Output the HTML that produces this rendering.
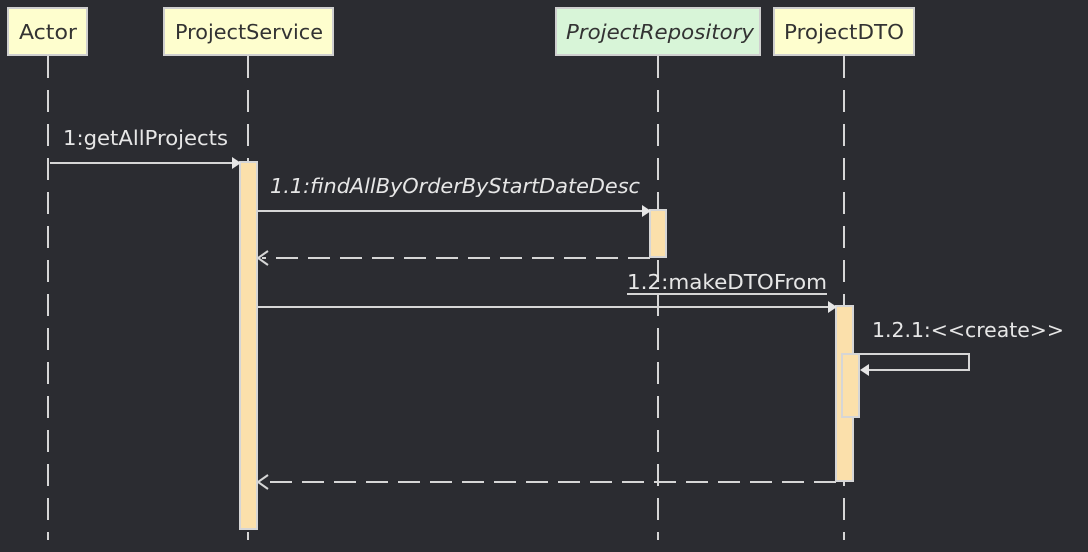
<!DOCTYPE html><html><head><style>body{margin:0;background:#2b2c31}svg{display:block}text{font-family:"DejaVu Sans","Liberation Sans",sans-serif;font-size:20px;fill:#e6e6e6}</style></head><body>
<svg width="1088" height="552" viewBox="0 0 1088 552">
<rect width="1088" height="552" fill="#2b2c31"/>
<g stroke="#d6d6d6" stroke-width="2" stroke-dasharray="22 12" fill="none">
<line x1="48" y1="56" x2="48" y2="540"/><line x1="248" y1="56" x2="248" y2="540"/><line x1="658" y1="56" x2="658" y2="540"/><line x1="844" y1="56" x2="844" y2="540"/>
</g>
<g stroke="#cfcfcf" stroke-width="2">
<rect x="8" y="8" width="79" height="47" fill="#fefece"/>
<rect x="164" y="8" width="169" height="47" fill="#fefece"/>
<rect x="556" y="8" width="204" height="47" fill="#d8f5d8"/>
<rect x="774" y="8" width="140" height="47" fill="#fefece"/>
</g>
<text x="19" y="39" style="fill:#333" textLength="58" lengthAdjust="spacingAndGlyphs">Actor</text>
<text x="175" y="39" style="fill:#333" textLength="148" lengthAdjust="spacingAndGlyphs">ProjectService</text>
<text x="566" y="39" style="fill:#333;font-style:italic" textLength="188" lengthAdjust="spacingAndGlyphs">ProjectRepository</text>
<text x="784" y="39" style="fill:#333" textLength="120" lengthAdjust="spacingAndGlyphs">ProjectDTO</text>
<g stroke="#d6d6d6" stroke-width="2" fill="#fbe0ab">
<rect x="240" y="162" width="17" height="367"/>
<rect x="650" y="210" width="16" height="47"/>
<rect x="836" y="306" width="17" height="175"/>
<rect x="842" y="354" width="17" height="63"/>
</g>
<g stroke="#d6d6d6" stroke-width="2" fill="none">
<line x1="50" y1="163" x2="232" y2="163"/>
<line x1="258" y1="211" x2="642" y2="211"/>
<line x1="650" y1="258" x2="262" y2="258" stroke-dasharray="22 10"/>
<line x1="258" y1="307" x2="828" y2="307"/>
<polyline points="853,354 969,354 969,370 866,370"/>
<line x1="836" y1="482" x2="262" y2="482" stroke-dasharray="22 10"/>
<polyline points="268,251 258,258 268,265"/>
<polyline points="268,475 258,482 268,489"/>
<line x1="627" y1="294" x2="827" y2="294"/>
</g>
<g fill="#e6e6e6">
<polygon points="232,157 241,163 232,169"/>
<polygon points="642,205 651,211 642,217"/>
<polygon points="828,301 837,307 828,313"/>
<polygon points="869,364 860,370 869,376"/>
</g>
<text x="63" y="145" textLength="165" lengthAdjust="spacingAndGlyphs">1:getAllProjects</text>
<text x="270" y="193" style="font-style:italic" textLength="370" lengthAdjust="spacingAndGlyphs">1.1:findAllByOrderByStartDateDesc</text>
<text x="627" y="289" textLength="200" lengthAdjust="spacingAndGlyphs">1.2:makeDTOFrom</text>
<text x="872" y="337" textLength="192" lengthAdjust="spacingAndGlyphs">1.2.1:&lt;&lt;create&gt;&gt;</text>
</svg></body></html>
